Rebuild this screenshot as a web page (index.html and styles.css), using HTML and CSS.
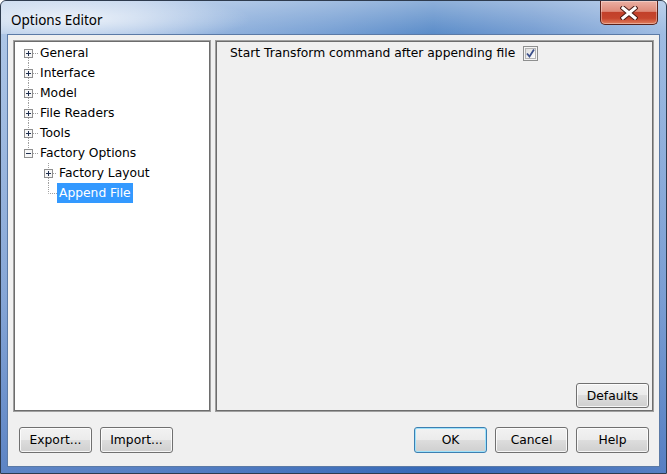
FILE: index.html
```html
<!DOCTYPE html>
<html>
<head>
<meta charset="utf-8">
<title>Options Editor</title>
<link rel="stylesheet" href="styles.css">
</head>
<body>
<div class="window">
  <div class="titlebar">
    <span class="title">Options Editor</span>
    <div class="close">
      <svg width="18" height="14" viewBox="0 0 18 14">
        <path d="M3 2L15 12M15 2L3 12" stroke="#4a1c16" stroke-width="5" stroke-linecap="square" fill="none"/>
        <path d="M3 2L15 12M15 2L3 12" stroke="#ffffff" stroke-width="3" stroke-linecap="square" fill="none"/>
      </svg>
    </div>
  </div>
  <div class="frame">
    <div class="content">
      <div class="panels">
        <div class="tree">
          <div class="row">
            <svg class="exp" width="23" height="20" viewBox="0 0 23 20"><path class="dots" d="M13.5 15V20M18 10.5H23"/><rect class="box" x="9.5" y="6.5" width="8" height="8"/><path class="sign" d="M11 10.5H16M13.5 8V13"/></svg>
            <span class="label">General</span>
          </div>
          <div class="row">
            <svg class="exp" width="23" height="20" viewBox="0 0 23 20"><path class="dots" d="M13.5 0V6M13.5 15V20M18 10.5H23"/><rect class="box" x="9.5" y="6.5" width="8" height="8"/><path class="sign" d="M11 10.5H16M13.5 8V13"/></svg>
            <span class="label">Interface</span>
          </div>
          <div class="row">
            <svg class="exp" width="23" height="20" viewBox="0 0 23 20"><path class="dots" d="M13.5 0V6M13.5 15V20M18 10.5H23"/><rect class="box" x="9.5" y="6.5" width="8" height="8"/><path class="sign" d="M11 10.5H16M13.5 8V13"/></svg>
            <span class="label">Model</span>
          </div>
          <div class="row">
            <svg class="exp" width="23" height="20" viewBox="0 0 23 20"><path class="dots" d="M13.5 0V6M13.5 15V20M18 10.5H23"/><rect class="box" x="9.5" y="6.5" width="8" height="8"/><path class="sign" d="M11 10.5H16M13.5 8V13"/></svg>
            <span class="label">File Readers</span>
          </div>
          <div class="row">
            <svg class="exp" width="23" height="20" viewBox="0 0 23 20"><path class="dots" d="M13.5 0V6M13.5 15V20M18 10.5H23"/><rect class="box" x="9.5" y="6.5" width="8" height="8"/><path class="sign" d="M11 10.5H16M13.5 8V13"/></svg>
            <span class="label">Tools</span>
          </div>
          <div class="row">
            <svg class="exp" width="23" height="20" viewBox="0 0 23 20"><path class="dots" d="M13.5 0V6M18 10.5H23"/><rect class="box" x="9.5" y="6.5" width="8" height="8"/><path class="sign" d="M11 10.5H16"/></svg>
            <span class="label">Factory Options</span>
          </div>
          <div class="row">
            <svg class="exp" width="42" height="20" viewBox="0 0 42 20"><path class="dots" d="M33.5 0V6M33.5 15V20M38 10.5H42"/><rect class="box" x="29.5" y="6.5" width="8" height="8"/><path class="sign" d="M31 10.5H36M33.5 8V13"/></svg>
            <span class="label">Factory Layout</span>
          </div>
          <div class="row">
            <svg class="exp" width="42" height="20" viewBox="0 0 42 20"><path class="dots" d="M33.5 0V10.5H42"/></svg>
            <span class="label selected">Append File</span>
          </div>
        </div>
        <div class="settings">
          <div class="option">
            <span class="option-text">Start Transform command after appending file</span>
            <svg class="check" width="15" height="15" viewBox="0 0 15 15">
              <defs>
                <linearGradient id="cbg" x1="0" y1="0" x2="1" y2="1">
                  <stop offset="0" stop-color="#dcdcdc"/>
                  <stop offset="1" stop-color="#ffffff"/>
                </linearGradient>
              </defs>
              <rect x="0.5" y="0.5" width="14" height="14" fill="#f4f4f4" stroke="#8e8f8f"/>
              <rect x="2.5" y="2.5" width="10" height="10" fill="url(#cbg)" stroke="#b4b4b4"/>
              <path d="M4 7.5L6.5 10.5L11 3.5" stroke="#3b4f8a" stroke-width="1.8" fill="none"/>
            </svg>
          </div>
          <button class="btn defaults">Defaults</button>
        </div>
      </div>
      <div class="buttons">
        <button class="btn">Export...</button>
        <button class="btn">Import...</button>
        <span class="spacer"></span>
        <button class="btn focused">OK</button>
        <button class="btn">Cancel</button>
        <button class="btn">Help</button>
      </div>
    </div>
  </div>
</div>
</body>
</html>
```
FILE: styles.css
```css
html, body {
  margin: 0;
  padding: 0;
  background: #ffffff;
}

.window {
  box-sizing: border-box;
  width: 667px;
  height: 474px;
  border: 1px solid #2e3b4e;
  border-radius: 6px 6px 0 0;
  display: flex;
  flex-direction: column;
  background:
    linear-gradient(to right, #a9c3e5 0%, #9ebbe2 20%, #6f9ad1 50%, #5286c6 65%, #6d97cf 80%, #9bb9e1 100%);
  overflow: hidden;
}

.titlebar {
  height: 33px;
  flex: none;
  display: flex;
  align-items: flex-start;
  padding: 0 8px 0 9px;
  background:
    radial-gradient(ellipse 180px 26px at 70px 18px, rgba(255,255,255,0.75), rgba(255,255,255,0) 100%),
    linear-gradient(to bottom, rgba(255,255,255,0.35), rgba(255,255,255,0.05));
}

.title {
  font-family: "Noto Sans", "Open Sans", sans-serif;
  font-size: 13.5px;
  color: #000000;
  line-height: 20px;
  margin-top: 9px;
  margin-left: 1px;
}

.close {
  margin-left: auto;
  box-sizing: border-box;
  width: 58px;
  height: 24px;
  border: 1px solid #5a2119;
  border-top: none;
  border-radius: 0 0 5px 5px;
  background: linear-gradient(to bottom, #ebb0a4 0%, #de8a79 45%, #c2402a 50%, #c6452d 75%, #e07e5d 100%);
  display: flex;
  align-items: center;
  justify-content: center;
  box-shadow: inset 0 0 0 1px rgba(255,255,255,0.35);
}

.frame {
  flex: 1;
  display: flex;
  padding: 0 6px 6px 6px;
  background: linear-gradient(to bottom, rgba(255,255,255,0.05) 0%, rgba(30,80,170,0.25) 60%, rgba(30,80,170,0.55) 100%);
}

.content {
  flex: 1;
  box-sizing: border-box;
  border: 1px solid #5b7aa6;
  background: #f0f0f0;
  display: flex;
  flex-direction: column;
  padding: 5px 5px 13px 5px;
  font-family: "DejaVu Sans", Verdana, sans-serif;
  font-size: 12.3px;
  color: #000000;
}

.panels {
  flex: 1;
  display: flex;
  gap: 4px;
  min-height: 0;
}

.tree {
  box-sizing: border-box;
  width: 198px;
  background: #ffffff;
  border: 1px solid #a0a0a0;
  box-shadow: inset 0 0 0 1px #6d6d6d;
  padding: 2px 1px 0 1px;
}

.row {
  display: flex;
  height: 20px;
  align-items: stretch;
}

.exp {
  flex: none;
  display: block;
}

.dots {
  stroke: #a0a0a0;
  stroke-width: 1;
  stroke-dasharray: 1 1;
  fill: none;
}

.box {
  fill: #f7f7f7;
  stroke: #8f8f8f;
  stroke-width: 1;
}

.sign {
  stroke: #1f2f4f;
  stroke-width: 1;
  fill: none;
}

.label {
  padding: 0 2px;
  line-height: 20px;
  white-space: nowrap;
}

.label.selected {
  background: #3399ff;
  color: #ffffff;
}

.settings {
  flex: 1;
  box-sizing: border-box;
  border: 1px solid #a0a0a0;
  box-shadow: inset 0 0 0 1px #6d6d6d;
  display: flex;
  flex-direction: column;
  padding: 2px 4px 3px 14px;
}

.option {
  display: flex;
  align-items: center;
  height: 20px;
}

.option-text {
  line-height: 20px;
}

.check {
  display: block;
  margin-left: 8px;
}

.btn {
  box-sizing: border-box;
  width: 73px;
  height: 26px;
  border: 1px solid #707070;
  border-radius: 3px;
  background: linear-gradient(to bottom, #f2f2f2 0%, #ebebeb 50%, #dddddd 50%, #cfcfcf 100%);
  box-shadow: inset 0 0 0 1px rgba(255,255,255,0.8);
  font-family: "DejaVu Sans", Verdana, sans-serif;
  font-size: 12.3px;
  color: #000000;
  padding: 0;
  margin: 0;
}

.btn.focused {
  border-color: #3c7fb1;
  box-shadow: inset 0 0 0 1px #9fe2fb;
}

.defaults {
  margin-top: auto;
  align-self: flex-end;
  height: 25px;
}

.buttons {
  margin-top: 15px;
  display: flex;
  gap: 8px;
  padding: 0 5px 0 6px;
}

.spacer {
  flex: 1;
}
```
